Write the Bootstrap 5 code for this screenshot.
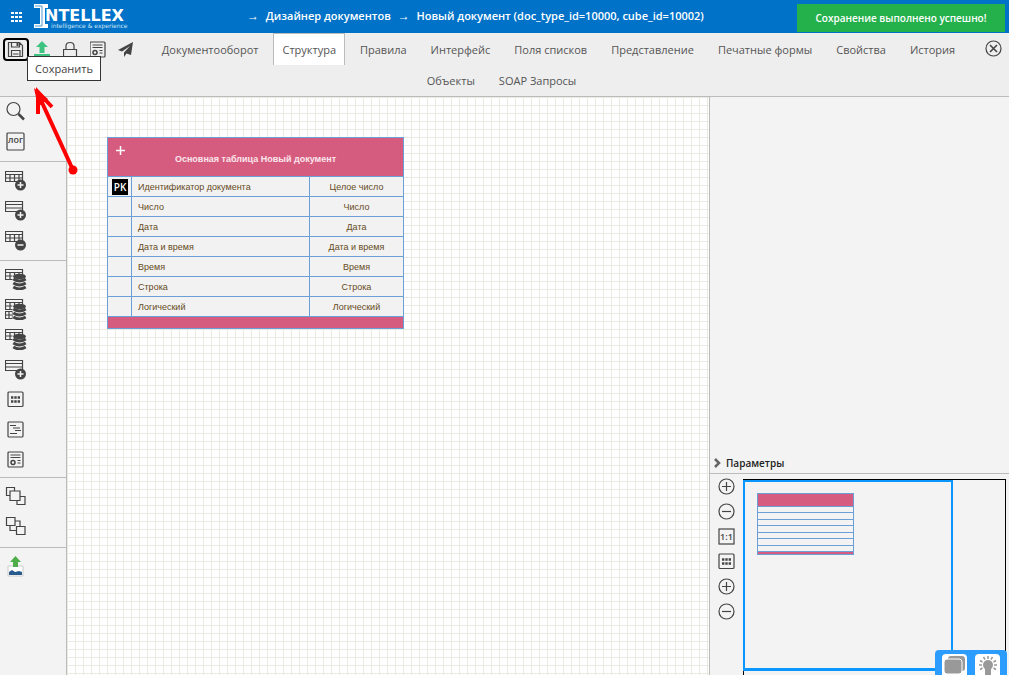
<!DOCTYPE html>
<html lang="ru">
<head>
<meta charset="utf-8">
<meta name="viewport" content="width=device-width, initial-scale=1">
<title>Intellex — Дизайнер документов</title>
<link href="https://cdn.jsdelivr.net/npm/bootstrap@5.3.0/dist/css/bootstrap.min.css" rel="stylesheet">
<style>
  body { font-family: "Open Sans", "Noto Sans", sans-serif; font-size: 11px; line-height: 18px; color: #555; background: #f3f3f3; overflow: hidden; }
  button { background: none; border: 0; padding: 0; color: #444; }
  svg { display: block; }
  .ic { fill: none; stroke: #444; stroke-width: 1.2; }
  .f { fill: #444; stroke: none; }
  .ic .bg { fill: #f3f3f3; }

  .topbar { background: #0072c8; height: 33px; color: #fff; }
  .apps-btn { width: 33px; padding-left: 11px; }
  .crumbs { margin-left: 116px; font-weight: 600; padding-bottom: 2px; }
  .crumbs a { color: #fff; text-decoration: none; }
  .crumbs span { font-size: 12px; }
  .notice { top: 4px; right: 4px; width: 208px; height: 28px; line-height: 29px; background: #24b04b; color: #fff; font-size: 10px; font-weight: 600; text-align: center; z-index: 5; }

  .menubar { background: #eee; border-bottom: 1px solid #bbb; text-align: center; height: 64px; }
  .quick { float: left; width: 147px; height: 31px; padding: 5px 0 0 3px; }
  .quick button { height: 24px; }
  .quick .first { width: 26px; height: 23px; border: 2px solid #000; border-radius: 4px; padding-left: 2px; }
  .close-box { float: right; width: 33px; height: 31px; padding: 0 0 0 9px; }
  .tabs { font-size: 0; }
  .tabs a { display: inline-block; height: 31px; line-height: 34px; padding: 0 8px; margin-right: 6px; border: 1px solid transparent; border-width: 0 1px; color: #555; text-decoration: none; font-size: 11px; vertical-align: top; }
  .tabs a.active { background: #fff; border-color: #bbb; border-top-width: 1px; height: 32px; margin-bottom: -1px; line-height: 32px; }
  .hint { left: 27px; top: 56px; width: 74px; height: 25px; line-height: 24px; background: #fff; border: 1px solid #333; color: #444; text-align: center; z-index: 6; }

  .tools { width: 67px; border-right: 1px solid #bbb; background: #f3f3f3; }
  .tool-group { padding: 3px 0 6px 5px; border-bottom: 1px solid #bbb; }
  .tool-group.top-group { padding-top: 0; padding-bottom: 4px; }
  .tool-group.mid-group { padding-bottom: 5px; }
  .tool-group.long-group { padding-bottom: 3px; }
  .tool-group.last-group { border: 0; }
  .tool-group button { height: 30px; width: 24px; display: flex; align-items: center; }

  .canvas { background: #fff linear-gradient(#e9eae2 1px, transparent 1px) 0 0 / 8px 8px; }
  .canvas::before { content: ""; position: absolute; inset: 0; background: linear-gradient(90deg, #e9eae2 1px, transparent 1px) 0 0 / 8px 8px; }
  .entity { left: 40px; top: 40px; width: 297px; table-layout: fixed; border-collapse: separate; border-spacing: 0; border: 1px solid #6a9fd8; border-width: 1px 0 0 1px; font: 9px/12px "Liberation Sans", sans-serif; color: #664a1c; }
  .entity td, .entity th { border: 1px solid #6a9fd8; border-width: 0 1px 1px 0; padding: 0; height: 20px; background: #f2f2f2; }
  .entity thead th { height: 39px; background: #d65c7f; color: #fbe6ec; text-align: center; padding-top: 4px; font-weight: 700; }
  .entity tfoot td { height: 12px; background: #d65c7f; }
  .entity .col-key { width: 24px; }
  .entity .col-kind { width: 94px; }
  .entity .name { padding-left: 6px; }
  .entity .kind { text-align: center; }
  .pk { display: block; width: 16px; height: 16px; margin-left: 4px; background: #000; color: #fff; font: 600 10px/16px "Open Sans", sans-serif; text-align: center; }
  .plus { left: 8px; top: 8px; }

  .side { width: 300px; border-left: 1px solid #bbb; background: #f3f3f3; }
  .params { height: 21px; border-bottom: 1px solid #bbb; padding: 1px 0 0 3px; }
  .params button { color: #222; font-weight: 600; font-size: 10px; }
  .overview { height: 201px; }
  .zoomers { width: 33px; padding-left: 8px; gap: 7px; padding-top: 3px; }
  .zoomers button { height: 18px; }
  .mini { margin: 5px 3px 0 0; border: 1px solid #000; border-bottom: 0; }
  .mini-view { width: 210px; height: 191px; border: 2px solid #0a96ff; border-width: 2px 2px 3px; margin-left: -1px; padding: 11px 12px; }
  .mini-table { width: 97px; height: 62px; border: 1px solid #6a9fd8; }
  .mini-table div { flex: 1 1 0; border-top: 1px solid #6a9fd8; }
  .mini-table .cap { flex: 0 0 12px; border: 0; background: #d65c7f; }
  .mini-table .low { flex: 0 0 3px; background: #d65c7f; }
  .helpers { right: 2px; bottom: 0; width: 72px; height: 25px; background: #2d9cff; border-radius: 4px 4px 0 0; padding: 4px 7px 0; z-index: 5; }
  .helpers button { width: 25px; height: 21px; background: #fff; border-radius: 4px 4px 0 0; }
  .pointer { left: 30px; top: 84px; z-index: 7; pointer-events: none; }
</style>
</head>
<body class="vh-100 d-flex flex-column position-relative">

<svg width="0" height="0" class="position-absolute">
  <defs>
    <g id="grid-table"><path d="M.5 1.500h17v10H.5zM.5 4.500h17M.5 8h17M5 4.500v7M9.500 4.500v7M14 4.500v7"/></g>
    <g id="row-table"><path d="M.5 1.500h17v10H.5zM.5 4.500h17M.5 8h17"/></g>
    <g id="badge-plus"><circle class="f" cx="15.500" cy="15" r="5.500"/><path d="M12.500 15h6M15.500 12v6" stroke="#f3f3f3" stroke-width="1.500"/></g>
    <g id="badge-minus"><circle class="f" cx="15.500" cy="15" r="5.500"/><path d="M12.500 15h6" stroke="#f3f3f3" stroke-width="1.500"/></g>
    <g id="disks"><path stroke="none" fill="#f3f3f3" d="M7.500 6h14v15h-14z"/><ellipse class="f" cx="14.500" cy="7.500" rx="6.500" ry="2.800"/><path d="M8.300 10q6.200 4 12.400 0M8.300 14q6.200 4 12.400 0M8.300 18q6.200 4 12.400 0" stroke-width="2.800"/></g>
    <g id="ring-plus"><circle cx="8.500" cy="8.500" r="7.500"/><path d="M4 8.500h9M8.500 4v9"/></g>
    <g id="ring-minus"><circle cx="8.500" cy="8.500" r="7.500"/><path d="M4 8.500h9"/></g>
    <g id="dots"><rect x="1" y="1" width="15" height="14.500" rx="1"/><path d="M4 6.500h9M4 10.500h9" stroke-width="2.500" stroke-dasharray="2.400 .9"/></g>
    <g id="report"><rect x="1" y="1" width="15" height="15" rx="1"/><path d="M3.500 4h10M3.500 6.500h10M10.500 9.500h3M10.500 12h3" stroke-width="1"/><circle cx="6" cy="11.500" r="2" stroke-width="1.500"/></g>
  </defs>
</svg>

<header class="topbar d-flex align-items-center flex-shrink-0">
  <button class="apps-btn" aria-label="Меню"><svg width="11" height="10" fill="#fff"><path d="M0 0h3v2H0zM4 0h3v2H4zM8 0h3v2H8zM0 4h3v2H0zM4 4h3v2H4zM8 4h3v2H8zM0 8h3v2H0zM4 8h3v2H4zM8 8h3v2H8z"/></svg></button>
  <svg width="98" height="27" role="img" aria-label="Intellex">
    <path d="M1 1h14v4h-3v16h3v4H1v-4h6V5H1z" fill="#fff"/><path d="M2 3h7v20H2" fill="none" stroke="#0072c8" stroke-width=".7"/>
    <text x="12" y="18" fill="#fff" font-family="DejaVu Sans" font-weight="700" font-size="16">NTELLEX</text>
    <text x="18" y="25" fill="#cfe4f5" font-family="DejaVu Sans" font-size="6">intelligence &amp; experience</text>
  </svg>
  <nav class="crumbs text-nowrap" aria-label="Путь">
    <span class="me-1">→</span> <a href="#">Дизайнер документов</a>
    <span class="mx-1">→</span> <a href="#">Новый документ (doc_type_id=10000, cube_id=10002)</a>
  </nav>
</header>
<div class="notice position-absolute" role="status">Сохранение выполнено успешно!</div>

<div class="menubar flex-shrink-0">
  <div class="quick d-flex align-items-start">
    <button class="first" aria-label="Сохранить"><svg class="ic" width="17" height="17"><path d="M2 1.500h10.500l3 3v11H1.500v-14zM4.500 2v4h8V2M4.500 15.500v-6h8.500v6M6 13h5.500"/><path class="f" d="M9.500 2h2v3h-2z"/></svg></button>
    <button class="ms-1" aria-label="Загрузить"><svg width="18" height="20" fill="#3fc380"><path d="M9 1l6 6h-3.500v6h-5V7H3zM1 14h16v4H1z"/></svg></button>
    <button class="ms-2 ps-1" aria-label="Заблокировать"><svg class="ic" width="15" height="20"><path d="M.5 9.500h13v9H.5zM3 9.500V6q0-3.500 4-3.500t4 3.500v3.500"/></svg></button>
    <button class="ms-2 ps-1" aria-label="Отчёт"><svg class="ic" width="16" height="19"><use href="#report" x="-1"/></svg></button>
    <button class="ms-2 ps-1" aria-label="Отправить"><svg width="15" height="19" fill="#444"><path d="M15 1L0 9l4 1.500L12 5l-6 6.500V16l2.500-3.500L13 14z"/></svg></button>
  </div>
  <button class="close-box" aria-label="Закрыть"><svg class="ic" width="17" height="17"><circle cx="8.500" cy="8.500" r="7.500"/><path d="M5 5l7 7M12 5l-7 7" stroke-width="1.600"/></svg></button>
  <nav class="tabs">
    <a href="#">Документооборот</a><a href="#" class="active" aria-current="page">Структура</a><a href="#">Правила</a><a href="#">Интерфейс</a><a href="#">Поля списков</a><a href="#">Представление</a><a href="#">Печатные формы</a><a href="#">Свойства</a><a href="#">История</a><a href="#">Объекты</a><a href="#">SOAP Запросы</a>
  </nav>
</div>
<div class="hint position-absolute" role="tooltip">Сохранить</div>

<main class="d-flex flex-grow-1 overflow-hidden">
  <aside class="tools flex-shrink-0">
    <div class="tool-group top-group">
      <button aria-label="Поиск"><svg class="ic" width="22" height="22"><circle cx="8.500" cy="8" r="6.500"/><path d="M13.500 13l5.500 5.500" stroke-width="2.500"/></svg></button>
      <button aria-label="Лог"><svg class="ic" width="22" height="20"><rect x="2" y="1" width="17" height="17" rx="1"/><text class="f" x="10.500" y="11" text-anchor="middle" font-size="9" font-weight="600">лог</text></svg></button>
    </div>
    <div class="tool-group mid-group">
      <button aria-label="Добавить таблицу"><svg class="ic" width="24" height="21"><use href="#grid-table"/><use href="#badge-plus"/></svg></button>
      <button aria-label="Добавить строку"><svg class="ic" width="24" height="21"><use href="#row-table"/><use href="#badge-plus"/></svg></button>
      <button aria-label="Удалить таблицу"><svg class="ic" width="24" height="21"><use href="#grid-table"/><use href="#badge-minus"/></svg></button>
    </div>
    <div class="tool-group long-group">
      <button aria-label="Таблица базы"><svg class="ic" width="24" height="21"><use href="#grid-table" y="-1"/><use href="#disks"/></svg></button>
      <button aria-label="Таблицы базы"><svg class="ic" width="24" height="21"><use href="#grid-table" y="-1"/><path d="M.5 12.500h7v7h-7zM.5 16h7M4 12.500v7"/><use href="#disks"/></svg></button>
      <button aria-label="Связь с базой"><svg class="ic" width="24" height="21"><use href="#grid-table" y="-1"/><use href="#disks"/></svg></button>
      <button aria-label="Добавить поле"><svg class="ic" width="24" height="21"><use href="#row-table"/><use href="#badge-plus"/></svg></button>
      <button aria-label="Сетка"><svg class="ic" width="24" height="17"><use href="#dots" x="2"/></svg></button>
      <button aria-label="Список"><svg class="ic" width="24" height="17"><rect x="3" y="1" width="15" height="15" rx="1"/><path d="M5 4.500h6M8 7h7M10 9.500h6M5 12.500h7"/></svg></button>
      <button aria-label="Отчёт"><svg class="ic" width="24" height="17"><use href="#report" x="2"/></svg></button>
    </div>
    <div class="tool-group">
      <button aria-label="На передний план"><svg class="ic" width="24" height="20"><path d="M1.500 1.500h8v8h-8zM12 10.500h8v8h-8z"/><path class="bg" d="M5 5h10v9.500H5z"/></svg></button>
      <button aria-label="На задний план"><svg class="ic" width="24" height="20"><path d="M5 5h10v9.500H5z"/><path class="bg" d="M1.500 1.500H10v8H1.500zM11.500 10.500H20v8h-8.500z"/></svg></button>
    </div>
    <div class="tool-group last-group">
      <button aria-label="Загрузить рисунок"><svg width="22" height="22"><path d="M3 11h15v10H3z" fill="#fff" stroke="#ccc"/><path d="M4 20v-3l3-2 3 2 4-1 3 1v3z" fill="#28598c"/><path d="M10.500 1l5.500 6h-3v5H8V7H5z" fill="#4fae4a"/></svg></button>
    </div>
  </aside>

  <section class="canvas position-relative flex-grow-1">
    <table class="entity position-absolute">
      <colgroup><col class="col-key"><col><col class="col-kind"></colgroup>
      <thead><tr><th colspan="3" class="position-relative"><svg class="plus position-absolute" width="9" height="9"><path d="M0 4.500h9M4.500 0v9" stroke="#fff" stroke-width="1.500"/></svg>Основная таблица Новый документ</th></tr></thead>
      <tbody>
        <tr><td><span class="pk">PK</span></td><td class="name">Идентификатор документа</td><td class="kind">Целое число</td></tr>
        <tr><td></td><td class="name">Число</td><td class="kind">Число</td></tr>
        <tr><td></td><td class="name">Дата</td><td class="kind">Дата</td></tr>
        <tr><td></td><td class="name">Дата и время</td><td class="kind">Дата и время</td></tr>
        <tr><td></td><td class="name">Время</td><td class="kind">Время</td></tr>
        <tr><td></td><td class="name">Строка</td><td class="kind">Строка</td></tr>
        <tr><td></td><td class="name">Логический</td><td class="kind">Логический</td></tr>
      </tbody>
      <tfoot><tr><td colspan="3"></td></tr></tfoot>
    </table>
  </section>

  <aside class="side flex-shrink-0 d-flex flex-column justify-content-end">
    <div class="params"><button class="d-flex align-items-center gap-1"><svg width="9" height="10"><path d="M2 1l4 4-4 4" fill="none" stroke="#666" stroke-width="2.500"/></svg>Параметры</button></div>
    <div class="overview d-flex overflow-hidden">
      <div class="zoomers d-flex flex-column flex-shrink-0">
        <button aria-label="Увеличить"><svg class="ic" width="17" height="17"><use href="#ring-plus"/></svg></button>
        <button aria-label="Уменьшить"><svg class="ic" width="17" height="17"><use href="#ring-minus"/></svg></button>
        <button aria-label="Масштаб 1:1"><svg class="ic" width="17" height="17"><rect x="1" y="1" width="15" height="15"/><text class="f" x="8.500" y="12" text-anchor="middle" font-size="9" font-weight="600">1:1</text></svg></button>
        <button aria-label="Сетка"><svg class="ic" width="17" height="17"><use href="#dots"/></svg></button>
        <button aria-label="Увеличить карту"><svg class="ic" width="17" height="17"><use href="#ring-plus"/></svg></button>
        <button aria-label="Уменьшить карту"><svg class="ic" width="17" height="17"><use href="#ring-minus"/></svg></button>
      </div>
      <div class="mini flex-grow-1">
        <div class="mini-view">
          <div class="mini-table d-flex flex-column"><div class="cap"></div><div></div><div></div><div></div><div></div><div></div><div></div><div></div><div class="low"></div></div>
        </div>
      </div>
    </div>
  </aside>
</main>

<div class="helpers position-absolute d-flex justify-content-between">
  <button aria-label="Сообщения"><svg width="25" height="21"><rect x="6" y="2" width="17" height="15" rx="3" fill="#999"/><rect x="2" y="5" width="18" height="15" rx="3" fill="#999" stroke="#fff"/></svg></button>
  <button aria-label="Подсказки"><svg width="25" height="21"><circle cx="13" cy="11" r="5" fill="#999"/><path d="M10 14h6v7h-6z" fill="#999"/><path d="M4 11h3M19 11h3M5 6.500l2.500 1.500M21 6.500L18.500 8M8.500 3l1.500 2.500M17.500 3L16 5.500M13 2v3M5 15.500L7.500 14M21 15.500L18.500 14" stroke="#999" stroke-width="1.500"/></svg></button>
</div>

<svg class="pointer position-absolute" width="52" height="94" fill="none" stroke="#f00"><path d="M43 86L9 12" stroke-width="4"/><path d="M8 30V8l14 15" stroke-width="4"/><path d="M4 4l14 11-10 8z" fill="#f00" stroke="none"/><circle cx="43" cy="86" r="4.500" fill="#f00" stroke="none"/></svg>

<script src="https://cdn.jsdelivr.net/npm/bootstrap@5.3.0/dist/js/bootstrap.bundle.min.js"></script>
</body>
</html>
